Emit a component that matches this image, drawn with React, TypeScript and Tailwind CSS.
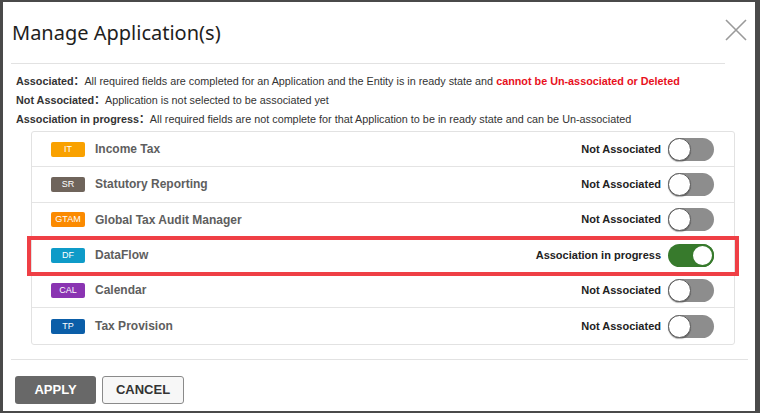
import React from "react";

type App = {
  code: string;
  name: string;
  badge: string;
  status: string;
  on?: boolean;
  highlight?: boolean;
};

const apps: App[] = [
  { code: "IT", name: "Income Tax", badge: "bg-[#f9a100]", status: "Not Associated" },
  { code: "SR", name: "Statutory Reporting", badge: "bg-[#6f645b]", status: "Not Associated" },
  { code: "GTAM", name: "Global Tax Audit Manager", badge: "bg-[#fb8a00]", status: "Not Associated" },
  { code: "DF", name: "DataFlow", badge: "bg-[#0e9bc8]", status: "Association in progress", on: true, highlight: true },
  { code: "CAL", name: "Calendar", badge: "bg-[#8a34b2]", status: "Not Associated" },
  { code: "TP", name: "Tax Provision", badge: "bg-[#0b5ea8]", status: "Not Associated" },
];

function Toggle({ on }: { on?: boolean }) {
  return (
    <div
      className={`flex h-[23px] w-[46px] items-center rounded-full ${
        on ? "justify-end bg-[#377a2c]" : "justify-start bg-[#8d8d8d]"
      }`}
    >
      <div
        className={`h-[23px] w-[23px] rounded-full bg-white ${
          on ? "border-2 border-[#377a2c]" : "border border-[#5a5a5a] shadow-[0_1px_1px_rgba(0,0,0,0.3)]"
        }`}
      />
    </div>
  );
}

function Row({ app, last }: { app: App; last: boolean }) {
  return (
    <div
      className={`relative flex h-[35.3px] items-center pl-[19px] pr-[20px] ${
        last ? "" : "border-b border-[#e4e4e4]"
      }`}
    >
      <div
        className={`flex h-[15px] w-[34px] items-center justify-center rounded-[2px] text-[9px] leading-none text-white ${app.badge}`}
      >
        {app.code}
      </div>
      <div className="ml-[10px] flex-1 text-[12px] font-bold text-[#5e5e5e]">{app.name}</div>
      <div className="mr-[7px] text-[11px] font-bold text-[#222]">{app.status}</div>
      <Toggle on={app.on} />
      {app.highlight && (
        <div className="pointer-events-none absolute -left-[5px] -right-[5px] -top-[2px] -bottom-[4px] border-[4px] border-[#ef3f45]" />
      )}
    </div>
  );
}

export default function App() {
  return (
    <div
      className="h-[413px] w-[760px] overflow-hidden bg-[#4a4a4a]"
      style={{ fontFamily: '"Liberation Sans", Arial, "Noto Sans CJK SC", sans-serif' }}
    >
      <div className="ml-[3px] mt-[2px] flex h-[409px] w-[752px] flex-col bg-white">
        {/* header */}
        <div className="flex h-[61px] items-center justify-between pl-[9px] pr-[8px]">
          <h1
            className="text-[20px] font-normal text-[#1e1e1e]"
            style={{ fontFamily: '"Noto Sans", "Open Sans", sans-serif' }}
          >
            Manage Application(s)
          </h1>
          <svg width="22" height="22" viewBox="0 0 22 22" className="mb-[6px]">
            <path d="M1 1 L21 21 M21 1 L1 21" stroke="#9a9a9a" strokeWidth="1.6" fill="none" />
          </svg>
        </div>
        <div className="ml-[8px] mr-[30px] h-px bg-[#e2e2e2]" />

        {/* legend */}
        <div className="mt-[8px] pl-[13px] text-[10.8px] leading-[19px] text-[#333]">
          <div>
            <span className="font-bold">Associated：</span>All required fields are completed for an Application and the
            Entity is in ready state and{" "}
            <span className="font-bold text-[#e8101c]">cannot be Un-associated or Deleted</span>
          </div>
          <div>
            <span className="font-bold">Not Associated：</span>Application is not selected to be associated yet
          </div>
          <div>
            <span className="font-bold">Association in progress：</span>All required fields are not complete for that
            Application to be in ready state and can be Un-associated
          </div>
        </div>

        {/* application list */}
        <div className="ml-[28px] mr-[20px] mt-[2px] rounded-[3px] border border-[#e2e2e2]">
          {apps.map((a, i) => (
            <Row key={a.code} app={a} last={i === apps.length - 1} />
          ))}
        </div>

        <div className="ml-[8px] mr-[7px] mt-[14px] h-px bg-[#e2e2e2]" />

        {/* footer */}
        <div className="mt-[16px] flex gap-[6px] pl-[12px]">
          <button className="h-[28px] w-[81px] rounded-[3px] bg-[#686868] text-[13px] font-bold text-white">
            APPLY
          </button>
          <button className="h-[28px] w-[82px] rounded-[3px] border border-[#8a8a8a] bg-[#f7f7f7] text-[13px] font-bold text-[#333]">
            CANCEL
          </button>
        </div>
      </div>
    </div>
  );
}
